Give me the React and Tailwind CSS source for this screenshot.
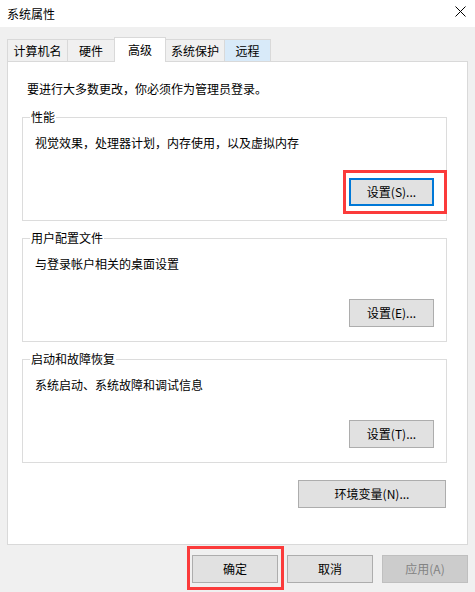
import React from "react";

const font = { fontFamily: '"Noto Sans CJK SC", "Noto Sans", sans-serif' };

function Tab({ label, active, hover, width }) {
  if (active) {
    return (
      <div className={`relative z-10 -mb-px -ml-px h-[25px] ${width} flex items-start justify-center pt-[3px] bg-white border border-b-0 border-[#d9d9d9]`}>
        {label}
      </div>
    );
  }
  return (
    <div
      className={`h-[22px] ${width} flex items-center justify-center border border-b-0 border-[#d9d9d9] -ml-px first:ml-0 ${
        hover ? "bg-[#d8eaf9]" : "bg-[#f0f0f0]"
      }`}
    >
      {label}
    </div>
  );
}

function Button({ children, className = "", disabled, focused }) {
  return (
    <button
      className={`h-[28px] flex items-center justify-center text-[12px] ${
        focused
          ? "border-2 border-[#0078d7] bg-[#e1e1e1]"
          : disabled
          ? "border border-[#bfbfbf] bg-[#cccccc] text-[#838383]"
          : "border border-[#adadad] bg-[#e1e1e1]"
      } ${className}`}
    >
      {children}
    </button>
  );
}

function Group({ title, text, button, highlight }) {
  return (
    <div className="relative ml-[14px] w-[425px] h-[104px] border border-[#dcdcdc] flex flex-col pl-[12px] pr-[12px] pt-[17px] pb-[14px]">
      <span className="absolute -top-[9px] left-[7px] bg-white px-[1px] leading-[16px]">{title}</span>
      <p className="leading-[16px]">{text}</p>
      <div className="mt-auto self-end relative">
        <Button focused={highlight} className="w-[85px]">
          {button}
        </Button>
        {highlight && (
          <span className="absolute -left-[6px] -right-[13px] -top-[8px] -bottom-[8px] border-[3px] border-[#fb3b3b] pointer-events-none" />
        )}
      </div>
    </div>
  );
}

export default function App() {
  return (
    <div className="w-[475px] h-[592px] bg-[#f0f0f0] text-[12px] text-black overflow-hidden flex flex-col" style={font}>
      <div className="h-[27px] bg-white flex items-center justify-between pl-[7px] pr-[9px]">
        <span>系统属性</span>
        <svg width="11" height="11" viewBox="0 0 11 11" className="mb-[4px]">
          <path d="M0.5 0.5 L10.5 10.5 M10.5 0.5 L0.5 10.5" stroke="#000" strokeWidth="1" />
        </svg>
      </div>

      <div className="pl-[7px] pt-[9px]">
        <div className="flex items-end h-[25px]">
          <Tab label="计算机名" width="w-[61px]" />
          <Tab label="硬件" width="w-[48px]" />
          <Tab label="高级" width="w-[52px]" active />
          <Tab label="系统保护" width="w-[60px]" />
          <Tab label="远程" width="w-[47px]" hover />
        </div>

        <div className="w-[461px] h-[484px] bg-white border border-[#d9d9d9] flex flex-col">
          <p className="pl-[19px] pt-[19px] leading-[16px]">要进行大多数更改，你必须作为管理员登录。</p>

          <div className="mt-[20px] flex flex-col gap-[17px]">
            <Group title="性能" text="视觉效果，处理器计划，内存使用，以及虚拟内存" button="设置(S)..." highlight />
            <Group title="用户配置文件" text="与登录帐户相关的桌面设置" button="设置(E)..." />
            <Group title="启动和故障恢复" text="系统启动、系统故障和调试信息" button="设置(T)..." />
          </div>

          <div className="flex justify-end pr-[21px] mt-[17px]">
            <Button className="w-[148px]">环境变量(N)...</Button>
          </div>
        </div>
      </div>

      <div className="flex justify-end gap-[9px] pr-[7px] mt-[10px]">
        <div className="relative">
          <Button className="w-[86px]">确定</Button>
          <span className="absolute -left-[5px] -right-[6px] -top-[9px] -bottom-[7px] border-[3px] border-[#fb3b3b] pointer-events-none" />
        </div>
        <Button className="w-[86px]">取消</Button>
        <Button className="w-[86px]" disabled>
          应用(A)
        </Button>
      </div>
    </div>
  );
}
